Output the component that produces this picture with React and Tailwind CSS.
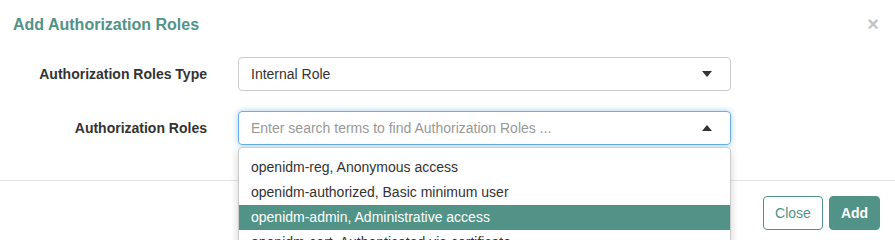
import React from "react";

function Caret({ up }) {
  return (
    <svg width="10" height="6" viewBox="0 0 10 6" className="shrink-0">
      {up ? <path d="M0 6 L5 0 L10 6 Z" fill="#333" /> : <path d="M0 0 L10 0 L5 6 Z" fill="#333" />}
    </svg>
  );
}

export default function App() {
  const items = [
    "openidm-reg, Anonymous access",
    "openidm-authorized, Basic minimum user",
    "openidm-admin, Administrative access",
    "openidm-cert, Authenticated via certificate",
  ];
  return (
    <div
      className="relative w-[895px] h-[240px] overflow-hidden bg-white text-[#333]"
      style={{ fontFamily: '"Liberation Sans", Arial, sans-serif' }}
    >
      <div className="flex items-center justify-between h-[48px] pl-[13px] pr-[15px]">
        <h4 className="text-[16px] font-bold text-[#519387] leading-none pt-[1px]">Add Authorization Roles</h4>
        <span className="text-[#c4c4c4] text-[20px] font-bold leading-none mr-[1px]">×</span>
      </div>

      <div className="flex flex-col gap-[20px] pt-[9px] h-[132px]">
        <div className="flex items-center">
          <label className="w-[207px] text-right text-[14px] font-bold">Authorization Roles Type</label>
          <div className="ml-[31px] w-[493px] h-[34px] border border-[#ccc] rounded-[4px] flex items-center justify-between pl-[12px] pr-[18px] text-[14px]">
            <span>Internal Role</span>
            <Caret />
          </div>
        </div>
        <div className="flex items-center">
          <label className="w-[207px] text-right text-[14px] font-bold">Authorization Roles</label>
          <div className="ml-[31px] w-[493px] h-[34px] border border-[#66afe9] rounded-[4px] shadow-[0_0_6px_rgba(102,175,233,0.6)] flex items-center justify-between pl-[12px] pr-[18px] text-[14px]">
            <span className="text-[#999]">Enter search terms to find Authorization Roles ...</span>
            <Caret up />
          </div>
        </div>
      </div>

      <div className="border-t border-[#e5e5e5] flex justify-end gap-[6px] pt-[15px] pr-[15px]">
        <button className="w-[60px] h-[34px] border border-[#519387] rounded-[4px] text-[14px] text-[#519387] bg-white">Close</button>
        <button className="w-[51px] h-[34px] border border-[#519387] rounded-[4px] text-[14px] text-white font-bold bg-[#519387]">Add</button>
      </div>

      <div className="absolute left-[238px] top-[147px] w-[493px] bg-white border border-[#ccc] rounded-t-[4px] shadow-[0_3px_8px_rgba(0,0,0,0.18)] pt-[7px]">
        {items.map((t, i) => (
          <div
            key={t}
            className={
              i === 2
                ? "h-[25px] flex items-center pl-[12px] text-[14px] bg-[#519387] text-white"
                : "h-[25px] flex items-center pl-[12px] text-[14px] text-[#333]"
            }
          >
            {t}
          </div>
        ))}
      </div>
    </div>
  );
}
